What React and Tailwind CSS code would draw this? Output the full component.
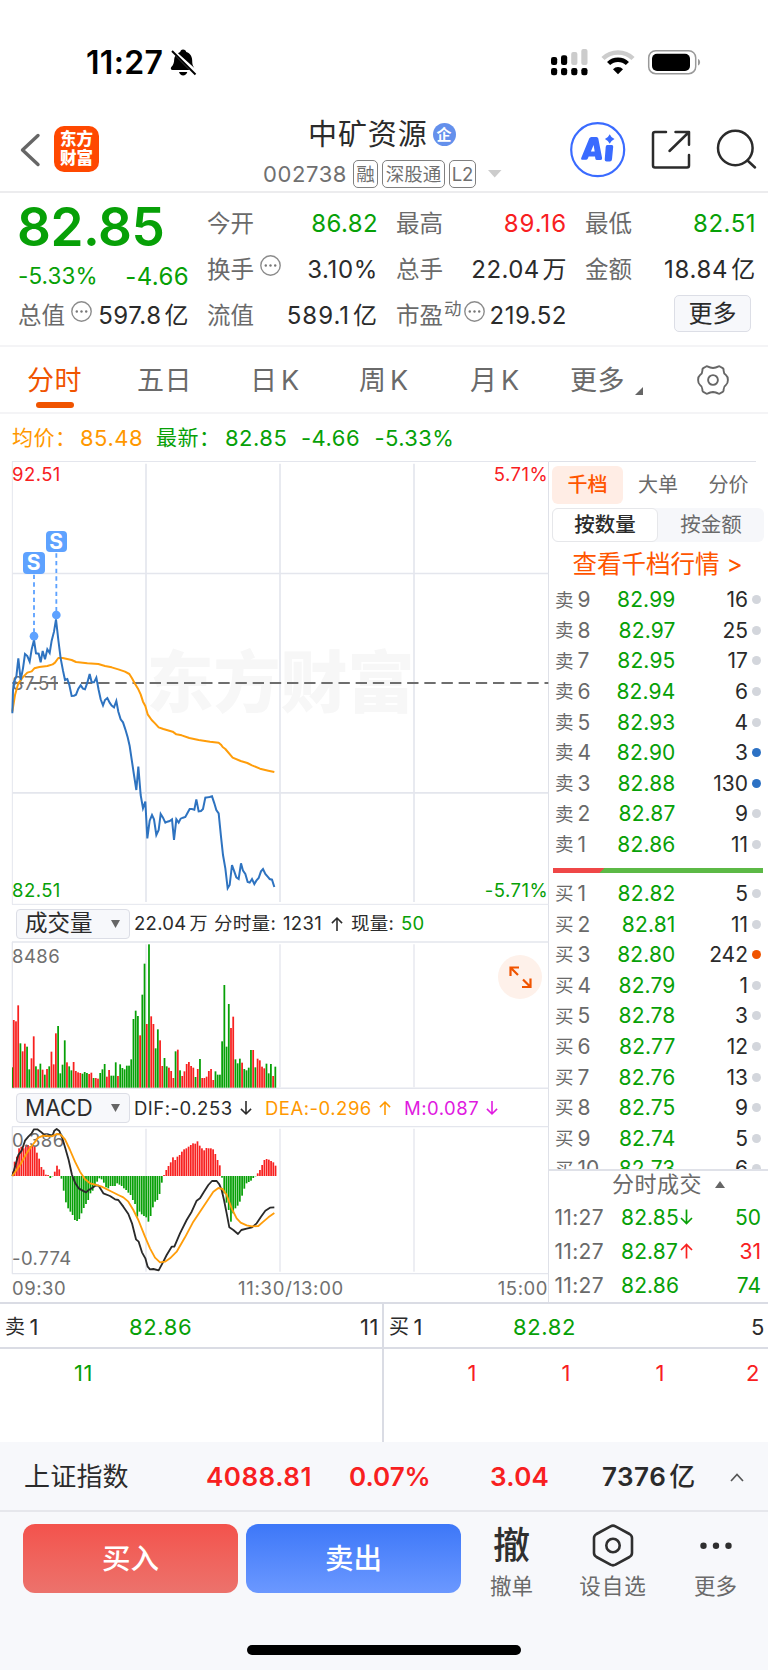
import React from "react";

const GREEN = "#07a007";
const RED = "#f8201f";

const pricePoints =
  "37,790 39,720 42,695 49,680 55,625 62,690 69,655 75,612 82,618 89,635 95,598 102,570 108,610 116,611 122,637 128,603 135,628 142,598 149,609 155,572 162,545 168,508 175,570 182,625 189,662 195,690 202,687 208,705 215,738 222,737 228,734 235,716 242,706 249,716 255,718 262,698 269,672 275,697 282,697 289,683 296,720 302,748 309,766 315,750 322,744 329,758 335,767 342,772 349,753 355,785 362,808 369,817 376,838 383,862 389,888 396,935 402,975 409,1020 415,950 422,1035 429,1075 436,1055 442,1165 449,1112 456,1095 462,1108 469,1155 476,1140 482,1092 489,1103 496,1118 502,1115 509,1113 516,1108 522,1170 529,1108 536,1118 542,1106 549,1103 556,1101 562,1090 569,1077 576,1077 583,1079 589,1048 596,1084 603,1083 609,1077 616,1043 623,1042 629,1041 636,1039 643,1060 649,1080 656,1090 663,1160 669,1215 676,1255 683,1315 689,1305 696,1245 703,1265 709,1282 716,1287 723,1240 729,1262 736,1272 743,1296 749,1298 756,1287 763,1302 769,1292 776,1284 783,1264 789,1257 796,1272 803,1280 809,1287 816,1289 823,1311";
const averagePoints =
  "37,785 45,735 55,700 68,682 82,668 95,664 103,655 118,651 142,648 158,643 165,638 175,624 188,624 215,630 228,636 262,640 295,642 315,648 335,652 355,658 375,665 388,672 396,685 404,700 415,718 422,733 429,755 436,768 443,793 455,810 465,820 476,832 490,837 518,845 529,853 545,856 568,864 596,870 630,875 656,878 663,884 668,891 676,897 698,923 722,933 742,939 756,946 780,956 805,962 823,966";
const difPoints =
  "37,828 45,800 55,765 65,752 75,722 85,710 95,700 102,688 112,688 122,695 130,702 138,708 148,705 158,706 163,692 170,687 178,693 186,712 196,745 206,780 216,825 226,850 236,865 248,872 258,877 266,870 275,865 286,857 296,857 310,880 330,888 345,898 355,900 370,920 385,942 396,970 408,1018 416,1025 426,1057 436,1075 443,1100 450,1108 460,1107 476,1111 490,1085 500,1065 515,1040 523,1040 540,1000 560,960 575,935 590,902 600,895 612,875 625,855 636,843 650,843 658,853 665,870 672,900 680,940 688,982 700,990 714,1002 724,990 740,986 756,982 770,970 783,950 796,932 810,923 823,922";
const deaPoints =
  "37,828 60,795 80,760 95,738 115,713 130,707 155,709 170,702 182,704 195,718 210,750 225,785 240,815 255,838 270,850 290,855 305,860 325,870 355,885 370,892 385,905 400,930 415,960 435,1010 450,1045 465,1073 480,1087 495,1085 510,1075 530,1055 555,1012 580,965 600,935 620,905 640,875 655,864 668,867 680,885 695,925 710,955 722,968 740,976 756,979 775,978 790,965 805,952 823,939";
const volumeBars =
  "G502 R360 R364 R316 G430 R454 R431 G440 G508 R475 R409 G499 R508 G491 R509 G524 R507 G499 R455 R493 R400 G378 G520 G494 G421 R487 G499 G511 R486 R513 R517 R519 G521 G516 G519 R522 R518 G534 R534 R536 G519 G508 G492 R530 R510 G527 G527 G487 R528 G493 G504 G508 G497 G497 G478 G357 G332 G348 R406 G284 G191 R372 G133 R349 R372 G445 G388 R421 R498 G474 G499 R503 R513 R534 G454 R449 G511 R528 R514 R492 R486 R498 R503 G531 R507 G477 R534 R534 R530 R513 R507 R540 G514 G524 G524 G424 G255 G440 G312 R384 R350 G478 G490 G476 R488 G507 G511 G503 G450 R450 G502 R476 R481 R500 R505 G491 G520 G492 R528 G500".split(" ");
const macdBars = [
  815, 785, 770, 745, 740, 745, 735, 735, 738, 735, 740, 758, 776, 801, 809, 824, 825, 834, 829, 815, 797, 808, 836, 872, 907, 925,
  935, 945, 960, 963, 957, 940, 924, 912, 900, 880, 872, 855, 845, 835, 838, 848, 862, 865, 858, 858, 858, 850, 854, 858, 865, 870,
  878, 885, 900, 912, 950, 935, 943, 948, 952, 965, 948, 922, 905, 900, 882, 848, 825, 810, 798, 787, 772, 780, 770, 765, 755, 748,
  745, 740, 735, 730, 731, 724, 737, 745, 751, 744, 745, 745, 748, 762, 780, 796, 833, 880, 908, 930, 965, 940, 925, 917, 905, 887,
  866, 850, 846, 842, 834, 829, 820, 810, 795, 780, 777, 779, 783, 787, 797,
];

const sells = [
  [9, "82.99", 16],
  [8, "82.97", 25],
  [7, "82.95", 17],
  [6, "82.94", 6],
  [5, "82.93", 4],
  [4, "82.90", 3, "bg-[#2c71c4]"],
  [3, "82.88", 130, "bg-[#2c71c4]"],
  [2, "82.87", 9],
  [1, "82.86", 11],
];
const buys = [
  [1, "82.82", 5],
  [2, "82.81", 11],
  [3, "82.80", 242, "bg-[#f05400]"],
  [4, "82.79", 1],
  [5, "82.78", 3],
  [6, "82.77", 12],
  [7, "82.76", 13],
  [8, "82.75", 9],
  [9, "82.74", 5],
  [10, "82.73", 6],
];

function StatusBar() {
  return (
    <div className="flex h-[98px] items-start pt-[46px] pl-[86px]">
      <span className="w-[83px] text-[32px] leading-[34px] font-semibold tracking-[0.300px] text-black">11:27</span>
      <svg width="30" height="32" viewBox="0 0 30 32">
        <path d="M14 3.500c1.800 0 3 1 3.300 2.400 4 1.200 5.900 4.500 5.900 8.600 0 5 1.200 6.500 3.600 8.800L9 7.300c.8-.7 1.500-1.100 2.200-1.400C11.500 4.500 12.300 3.500 14 3.500z" fill="#000" />
        <path d="M6.300 9.700 20.500 24H3.500c-1.600 0-2.200-1.500-1.200-2.900C4.800 18.200 5 16.500 5.200 13.200c0-1.300.5-2.500 1.100-3.500zM10 26h8.300c-.7 2.200-2.200 3.500-4.200 3.500S10.700 28.200 10 26z" fill="#000" />
        <path d="M3 5 26.500 28.500" stroke="#000" strokeWidth="2" />
      </svg>
      <svg className="ml-[350px]" width="160" height="32" viewBox="549 46 160 32">
        {[551, 561, 571.2, 581.3].map((x) => (
          <rect key={x} x={x} y="68" width="6.200" height="7.200" rx="2.200" />
        ))}
        <rect x="551" y="57" width="6.200" height="8" rx="2.200" />
        <rect x="561" y="55.300" width="6.200" height="9.700" rx="2.200" />
        <rect x="571.200" y="52" width="6.200" height="13" rx="2" fill="#ccc" />
        <rect x="581.300" y="49" width="6.200" height="16" rx="2" fill="#ccc" />
        <path d="M603 58.500a21.500 21.500 0 0 1 30 0" stroke="#ccc" strokeWidth="4.500" fill="none" />
        <path d="M608.600 63.500a13.500 13.500 0 0 1 18.800 0" stroke="#000" strokeWidth="4.500" fill="none" />
        <path d="M613 69.200a7 7 0 0 1 10 0l-5 5z" />
        <rect x="648.700" y="50.700" width="47" height="23" rx="7" fill="none" stroke="#999" strokeWidth="1.500" />
        <rect x="652" y="53.700" width="38" height="17.300" rx="5" />
        <path d="M698 59v6.500c2.800-1.200 2.800-5.300 0-6.500z" fill="#999" />
      </svg>
    </div>
  );
}

function Header() {
  const tag = "flex h-[28px] items-center justify-center rounded-[5px] border border-[#808080] text-[18.500px] leading-none text-[#707070]";
  return (
    <div className="flex h-[95px] border-b-2 border-[#ececee]">
      <svg className="mt-[34px] ml-[18px]" width="24" height="36" viewBox="18 132 24 36">
        <path d="M38 135.500 22.500 150 38 164.500" fill="none" stroke="#666" strokeWidth="3.400" strokeLinecap="round" strokeLinejoin="round" />
      </svg>
      <div className="mt-[28px] ml-[12px] flex h-[46px] w-[45px] flex-col items-center justify-center rounded-[10px] bg-[#ff4800] text-[16.500px] leading-[19.500px] font-black text-white">
        <span>东方</span>
        <span>财富</span>
      </div>
      <div className="ml-[164px] flex w-[241px] flex-col">
        <div className="mt-[20px] ml-[45px] flex h-[32px] items-center">
          <span className="text-[29px] leading-none tracking-[0.900px] text-[#2b2b2b]">中矿资源</span>
          <span className="ml-[5px] flex size-[23px] items-center justify-center rounded-full bg-[#6490ec] text-[15px] leading-none font-bold text-white">企</span>
        </div>
        <div className="mt-[10px] flex items-center">
          <span className="w-[90px] text-[22px] leading-none tracking-[0.600px] text-[#707070]">002738</span>
          <span className={tag + " w-[25px]"}>融</span>
          <span className={tag + " ml-[4px] w-[63px]"}>深股通</span>
          <span className={tag + " ml-[4px] w-[27px]"}>L2</span>
          <svg className="ml-[12px]" width="14" height="8">
            <path d="M0 0h13.500L6.700 7.500z" fill="#ccc" />
          </svg>
        </div>
      </div>
      <svg className="mt-[22px] ml-[64px]" width="196" height="60" viewBox="568 120 196 60">
        <circle cx="597.700" cy="149.700" r="26.500" fill="none" stroke="#3a6bff" strokeWidth="2.200" />
        <path
          fillRule="evenodd"
          d="M591.400 137h5q1.600 0 1.900 1.500l3.800 19.500q.3 2-1.600 2h-3.500q-1.500 0-1.700-1.500l-.3-2h-6.300l-1 2.200q-.5 1.100-1.700 1.100h-3.300q-2.200 0-1.400-2l7.900-19.300q.7-1.500 2.200-1.500zM593.600 145l-2.700 6.500h3.800z"
          fill="#3a6bff"
        />
        <path d="M607.300 145h4.400q1.700 0 1.500 1.700l-1.200 12.500q-.2 2.300-2.200 2.300h-3.200q-2 0-1.900-2l1-12.500q.1-2 1.600-2zM609.700 134.200q1.400 3.400 4.800 4.800-3.400 1.400-4.800 4.800-1.400-3.400-4.800-4.800 3.400-1.400 4.800-4.800z" fill="#3a6bff" />
        <g fill="none" stroke="#2b2b2b" strokeWidth="2.500" strokeLinecap="round" strokeLinejoin="round">
          <path d="M666 132h-11q-2 0-2 2v31.500q0 2 2 2h32q2 0 2-2V155M675.500 132H689v12.800M688.500 132.500 669.500 151" />
          <circle cx="735.300" cy="148" r="17.300" />
          <path d="M747.500 160.500 755 167.500" />
        </g>
      </svg>
    </div>
  );
}

function Dots() {
  return (
    <svg width="21" height="21" viewBox="0 0 21 21">
      <circle cx="10.500" cy="10.500" r="9.700" fill="none" stroke="#8c8c8c" strokeWidth="1.400" />
      <g fill="#777">
        <circle cx="5.800" cy="10.500" r="1.200" />
        <circle cx="10.500" cy="10.500" r="1.200" />
        <circle cx="15.200" cy="10.500" r="1.200" />
      </g>
    </svg>
  );
}

function Stat({ label, value, unit, sup, dots, tone = "text-[#2b2b2b]", spacing = "tracking-[0.400px]" }) {
  return (
    <div className="flex h-[46px] items-center justify-between text-[24px] leading-none whitespace-nowrap">
      <div className="flex items-center text-[#6a6a6a]">
        <span className="text-[23.500px]">{label}</span>
        {sup && <span className="mb-[14px] ml-[1px] text-[17.500px]">{sup}</span>}
        {dots && (
          <span className={sup ? "mb-[10px] ml-[2px]" : "mb-[10px] ml-[6px]"}>
            <Dots />
          </span>
        )}
      </div>
      <span className={tone + " -mr-[1px] " + spacing}>
        {value}
        {unit && <span className="ml-[3px]">{unit}</span>}
      </span>
    </div>
  );
}

function Quote() {
  return (
    <div className="grid h-[154px] grid-cols-[170px_170px_170px_170px] gap-x-[19px] border-b-2 border-[#f4f4f6] pt-[8px] pl-[18px]">
      <div className="flex flex-col text-[#07a007]">
        <div className="-ml-[1px] h-[52px] text-[53px] leading-[52px] font-semibold tracking-[-0.500px]">82.85</div>
        <div className="mt-[9px] mb-[2px] flex h-[29px] items-center justify-between leading-none">
          <span className="text-[22.500px] tracking-[0.100px]">-5.33%</span>
          <span className="-mr-[1px] text-[24px] tracking-[0.400px]">-4.66</span>
        </div>
        <Stat label="总值" value="597.8" unit="亿" dots spacing="tracking-[0.500px]" />
      </div>
      <div>
        <Stat label="今开" value="86.82" tone="text-[#07a007]" />
        <Stat label="换手" value="3.10%" dots spacing="tracking-[0.650px]" />
        <Stat label="流值" value="589.1" unit="亿" spacing="tracking-[1px]" />
      </div>
      <div>
        <Stat label="最高" value="89.16" tone="text-[#f8201f]" spacing="tracking-[0.950px]" />
        <Stat label="总手" value="22.04" unit="万" />
        <Stat label="市盈" value="219.52" sup="动" dots spacing="tracking-[0.500px]" />
      </div>
      <div>
        <Stat label="最低" value="82.51" tone="text-[#07a007]" spacing="tracking-[0.500px]" />
        <Stat label="金额" value="18.84" unit="亿" spacing="tracking-[0.700px]" />
        <div className="mt-[2px] mr-[4px] ml-auto flex h-[37px] w-[77px] items-center justify-center rounded-[5px] border border-[#dcdee6] bg-[#f7f8fb] text-[24px] leading-none text-[#2b2b2b]">更多</div>
      </div>
    </div>
  );
}

function KTab({ children, width }) {
  return (
    <span className={"flex gap-[4px] " + width}>
      <span>{children}</span>
      <span>K</span>
    </span>
  );
}

function Tabs() {
  return (
    <div className="flex h-[67px] items-center border-b-2 border-[#f4f4f6] pt-[1px] text-[27px] leading-none whitespace-nowrap text-[#6a6a6a]">
      <div className="ml-[27px] flex w-[110px] flex-col text-[#f05400]">
        <span className="mt-[15px] tracking-[0.500px]">分时</span>
        <span className="mt-[8px] ml-[9px] h-[6px] w-[38px] rounded-full bg-[#f05400]" />
      </div>
      <span className="w-[113px] tracking-[0.500px]">五日</span>
      <KTab width="w-[109px]">日</KTab>
      <KTab width="w-[111px]">周</KTab>
      <KTab width="w-[100px]">月</KTab>
      <span className="w-[65px] tracking-[0.500px]">更多</span>
      <svg width="8" height="8" className="mt-[21px]">
        <path d="M8 0v8H0z" fill="#666" />
      </svg>
      <svg className="ml-[54px]" width="32" height="30" viewBox="-16 -15 32 30">
        <path
          d="M0-12Q3-12.200 5-13.400Q6.200-14 7.300-13.300L9.700-11.900Q10.700-11.200 10.600-10Q10.400-6.600 12.900-5Q14.900-3.500 14.900 0Q14.900 3.500 12.900 5Q10.400 6.600 10.600 10Q10.700 11.200 9.700 11.900L7.300 13.300Q6.200 14 5 13.400Q3 12.200 0 12Q-3 12.200-5 13.400Q-6.200 14-7.300 13.300L-9.700 11.900Q-10.700 11.200-10.600 10Q-10.400 6.600-12.900 5Q-14.900 3.500-14.900 0Q-14.900-3.500-12.900-5Q-10.400-6.600-10.600-10Q-10.700-11.200-9.700-11.900L-7.300-13.300Q-6.200-14-5-13.400Q-3-12.200 0-12z"
          fill="none"
          stroke="#666"
          strokeWidth="1.900"
          strokeLinejoin="round"
        />
        <circle r="4.900" fill="none" stroke="#666" strokeWidth="1.900" />
      </svg>
    </div>
  );
}

function PriceLine() {
  return (
    <div className="flex h-[47px] items-center pl-[12px] text-[22px] leading-none tracking-[0.500px] whitespace-nowrap text-[#07a007]">
      <span className="w-[68px] text-[21px] text-[#ff9800]">均价：</span>
      <span className="w-[76px] text-[#ff9800]">85.48</span>
      <span className="w-[69px] text-[21px]">最新：</span>
      <span className="w-[76px]">82.85</span>
      <span className="w-[73.500px]">-4.66</span>
      <span className="tracking-[0.400px]">-5.33%</span>
    </div>
  );
}

const grid = "#e4e6ed";

function PriceChart() {
  return (
    <div className="relative h-[444px] w-[549px] text-[18.500px] leading-none tracking-[0.450px]">
      <div className="absolute top-[188px] left-[146.500px] text-[67px] font-black tracking-normal whitespace-nowrap text-[#f7f7f7]">东方财富</div>
      <svg className="absolute inset-0" width="549" height="444" viewBox="0 33 1647 1332">
        <g stroke={grid} fill="none">
          <path d="M36 34.500H1647M36 1363H1647M37 34V1363" strokeWidth="3" />
          <path d="M438 41V1356M840 41V1356M1242 41V1356" strokeWidth="5" />
          <path d="M37 370.500H1645M37 1028.500H1645" strokeWidth="5" />
        </g>
        <path d="M37 699H1645" stroke="#6e6e6e" strokeWidth="6" strokeDasharray="34 17.500" />
      </svg>
      <span className="absolute top-[213px] left-[12px] text-[#707070]">87.51</span>
      <svg className="absolute inset-0" width="549" height="444" viewBox="0 33 1647 1332">
        <polyline points={averagePoints} fill="none" stroke="#ff9d0a" strokeWidth="6" strokeLinejoin="round" />
        <polyline points={pricePoints} fill="none" stroke="#2e73c0" strokeWidth="6" />
        <path d="M102 374V550M169 310V488" stroke="#5ea2ff" strokeWidth="5.500" strokeDasharray="13 10" />
        <circle cx="102" cy="558.500" r="13" fill="#5ea2ff" />
        <circle cx="169" cy="495" r="13" fill="#5ea2ff" />
      </svg>
      <span className="absolute top-[91px] left-[23px] flex size-[21.500px] items-center justify-center rounded-[4px] bg-[#5ea2ff] text-[21px] font-bold tracking-normal text-white">S</span>
      <span className="absolute top-[69.500px] left-[45.500px] flex size-[21.500px] items-center justify-center rounded-[4px] bg-[#5ea2ff] text-[21px] font-bold tracking-normal text-white">S</span>
      <span className="absolute top-[3.500px] left-[12px] text-[#f8201f]">92.51</span>
      <span className="absolute top-[3.500px] right-[1px] text-[#f8201f]">5.71%</span>
      <span className="absolute top-[420px] left-[12px] text-[#07a007]">82.51</span>
      <span className="absolute top-[420px] right-[1px] text-[#07a007]">-5.71%</span>
    </div>
  );
}

function Picker({ children }) {
  return (
    <div className="ml-[16px] flex h-[30px] w-[114px] shrink-0 items-center justify-between rounded-[4px] border border-[#dcdee6] bg-[#f7f8fb] pr-[9px] pl-[8px] text-[22.500px] leading-none tracking-normal text-[#2b2b2b]">
      <span>{children}</span>
      <svg width="9" height="8">
        <path d="M0 0h9L4.500 8z" fill="#666" />
      </svg>
    </div>
  );
}

function Arrow({ up, className = "", size = 13 }) {
  return (
    <svg className={className} width={size} height="16" viewBox="0 0 13 16" fill="none" stroke="currentColor" strokeWidth="1.700">
      {up ? <path d="M6.500 15.500V1.500M1 7 6.500 1.500 12 7" /> : <path d="M6.500.500V14.500M1 9 6.500 14.500 12 9" />}
    </svg>
  );
}

function VolumeChart() {
  return (
    <div className="relative h-[148px] text-[18.500px] leading-none tracking-[0.450px] text-[#707070]">
      <svg className="absolute inset-0" width="549" height="148" viewBox="0 123 1647 444">
        <path d="M36 126H1645M36 565H1645" stroke={grid} strokeWidth="5" />
        <path d="M37 126V565M438 133V562M840 133V562M1242 133V562" stroke={grid} strokeWidth="4" />
        {volumeBars.map((bar, i) => (
          <rect key={i} x={Math.max(36, 32 + i * 6.65)} y={Number(bar.slice(1))} width="5.300" height={563 - Number(bar.slice(1))} fill={bar[0] === "G" ? GREEN : RED} />
        ))}
      </svg>
      <span className="absolute top-[6px] left-[12px]">8486</span>
      <svg className="absolute top-[14px] left-[498px]" width="44" height="44" viewBox="0 0 44 44">
        <circle cx="22" cy="22" r="22" fill="#fef1ea" />
        <path d="M21 12.500H12.500V21M12.500 12.500 20 20M32.500 23.500V32H24M32.500 32 25 24.500" fill="none" stroke="#f05400" strokeWidth="2.200" />
      </svg>
    </div>
  );
}

function MacdChart() {
  return (
    <div className="relative h-[149px] text-[18.500px] leading-none tracking-[0.450px] text-[#707070]">
      <svg className="absolute inset-0" width="549" height="149" viewBox="0 678 1647 447">
        <path d="M36 680H1645M36 1121H1645" stroke={grid} strokeWidth="4" />
        <path d="M37 680V1121M438 686V1115M840 686V1115M1242 686V1115" stroke={grid} strokeWidth="4" />
        {macdBars.map((y, i) => (
          <rect key={i} x={Math.max(36, 34.6 + i * 6.69)} y={Math.min(y, 828)} width="5.200" height={Math.abs(828 - y)} fill={y > 828 ? GREEN : RED} />
        ))}
      </svg>
      <span className="absolute top-[5px] left-[12px]">0.386</span>
      <span className="absolute top-[123px] left-[12px]">-0.774</span>
      <svg className="absolute inset-0" width="549" height="149" viewBox="0 678 1647 447">
        <polyline points={difPoints} fill="none" stroke="#2a2a2a" strokeWidth="5.500" strokeLinejoin="round" />
        <polyline points={deaPoints} fill="none" stroke="#ff9d0a" strokeWidth="5.500" strokeLinejoin="round" />
      </svg>
    </div>
  );
}

function ChartColumn() {
  return (
    <div className="w-[549px] shrink-0 border-r border-[#dfe1e8]">
      <PriceChart />
      <div className="flex h-[36px] items-center pt-[1px] text-[18.500px] leading-none tracking-[0.300px] whitespace-nowrap text-[#2b2b2b]">
        <Picker>成交量</Picker>
        <span className="ml-[4px] flex w-[80px] items-center gap-[3px]">
          <span>22.04</span>
          <span className="text-[18px]">万</span>
        </span>
        <span className="w-[69px]">分时量:</span>
        <span className="w-[48px]">1231</span>
        <Arrow up size={12} />
        <span className="ml-[8px] w-[50px]">现量:</span>
        <span className="text-[#07a007]">50</span>
      </div>
      <VolumeChart />
      <div className="flex h-[37px] items-center pt-[1px] text-[18.500px] leading-none tracking-[0.500px] whitespace-nowrap text-[#2b2b2b]">
        <Picker>MACD</Picker>
        <span className="ml-[4px] w-[106px]">DIF:-0.253</span>
        <Arrow size={12} />
        <span className="ml-[13px] w-[114px] text-[#ff9800]">DEA:-0.296</span>
        <Arrow up size={12} className="text-[#ff9800]" />
        <span className="ml-[13px] w-[82px] text-[#e01ae0]">M:0.087</span>
        <Arrow size={12} className="text-[#e01ae0]" />
      </div>
      <MacdChart />
      <div className="flex h-[27px] items-center justify-between pl-[12px] text-[18.500px] leading-none tracking-[0.550px] text-[#707070]">
        <span className="w-[100px]">09:30</span>
        <span className="ml-[22px] tracking-[0.750px]">11:30/13:00</span>
        <span className="w-[100px] text-right">15:00</span>
      </div>
    </div>
  );
}

function Level({ side, row }) {
  const [n, price, qty, dot = "bg-[#d3d6dc]"] = row;
  return (
    <div className="flex h-[30.580px] items-center pl-[6px] text-[21px] leading-none whitespace-nowrap">
      <span className="flex w-[50px] items-center gap-[4px] text-[#6a6a6a]">
        <span className="text-[18.500px]">{side}</span>
        <span>{n}</span>
      </span>
      <span className="w-[70.500px] text-right tracking-[0.150px] text-[#07a007]">{price}</span>
      <span className="w-[72.500px] text-right text-[#2b2b2b]">{qty}</span>
      <span className={"ml-[3.500px] size-[9px] rounded-full " + dot} />
    </div>
  );
}

function OrderBook() {
  return (
    <div className="flex h-[842px] w-[219px] flex-col">
      <div className="mr-[12px] h-px shrink-0 bg-[#dfe1e8]" />
      <div className="mt-[4px] flex h-[38px] shrink-0 items-center pl-[3px] text-[20px] leading-none text-[#6a6a6a]">
        <span className="flex h-full w-[71px] items-center justify-center rounded-[6px] bg-[#ffede5] font-medium text-[#ff5500]">千档</span>
        <span className="w-[70px] text-center">大单</span>
        <span className="w-[71px] text-center">分价</span>
      </div>
      <div className="mt-[4px] ml-[3px] flex h-[34px] w-[212px] shrink-0 items-center rounded-[6px] bg-[#f6f7fa] text-[20.500px] leading-none text-[#6a6a6a]">
        <span className="flex h-full w-[106px] items-center justify-center rounded-[6px] border border-[#e6e7ea] bg-white font-medium text-[#2b2b2b]">按数量</span>
        <span className="w-[106px] text-center">按金额</span>
      </div>
      <div className="flex h-[42.500px] shrink-0 items-center pt-[1px] pl-[23.500px] text-[24.500px] leading-none whitespace-nowrap text-[#ff5500]">
        <span>查看千档行情</span>
        <span className="ml-[7px]">&gt;</span>
      </div>
      <div className="h-[275.300px] shrink-0">
        {sells.map((r) => (
          <Level key={r[0]} side="卖" row={r} />
        ))}
      </div>
      <div className="mt-[8.200px] ml-[4px] flex h-[5px] w-[210px] shrink-0 bg-[linear-gradient(135deg,#ef4747_36px,#5cb946_36.500px)]" />
      <div className="mt-[5.300px] h-[291px] shrink-0 overflow-hidden">
        {buys.map((r) => (
          <Level key={r[0]} side="买" row={r} />
        ))}
      </div>
      <div className="flex h-[31px] shrink-0 items-center justify-center border-t-2 border-[#dfe1e8] pb-[3px] text-[22px] leading-none tracking-[0.500px] text-[#6a6a6a]">
        <span className="ml-[20px]">分时成交</span>
        <svg className="ml-[13px]" width="10" height="7">
          <path d="M0 7h10L5 0z" fill="#666" />
        </svg>
      </div>
      <div>
        <Trade price="82.85" vol="50" arrow={<Arrow size={13} />} tone="text-[#07a007]" />
        <Trade price="82.87" vol="31" arrow={<Arrow up size={13} />} tone="text-[#f8201f]" />
        <Trade price="82.86" vol="74" tone="text-[#07a007]" />
      </div>
    </div>
  );
}

function Trade({ price, vol, arrow, tone }) {
  return (
    <div className="flex h-[34px] shrink-0 items-center pl-[5.500px] text-[21px] leading-none">
      <span className="w-[66.500px] tracking-[0.300px] text-[#6a6a6a]">11:27</span>
      <span className="w-[59px] tracking-[0.150px] text-[#07a007]">{price}</span>
      <span className={"w-[20px] " + tone}>{arrow}</span>
      <span className={"w-[61px] text-right " + tone}>{vol}</span>
    </div>
  );
}

function Queue({ side, price, total, cells, tone, border }) {
  return (
    <div className={"w-[384px] text-[22px] leading-none tracking-[0.600px] " + border}>
      <div className="flex h-[45px] items-center border-b-2 border-[#dadce4] pt-[2px] pr-[3px] pl-[5px] text-[#2b2b2b]">
        <span className="flex w-[124px] items-center gap-[4px]">
          <span className="text-[20px]">{side}</span>1
        </span>
        <span className="flex-1 text-[#07a007]">{price}</span>
        <span>{total}</span>
      </div>
      <div className={"grid h-[50px] grid-cols-[93px_94px_94px_95px] items-center pb-[3px] text-right " + tone}>
        {cells.map((c, i) => (
          <span key={i}>{c}</span>
        ))}
      </div>
    </div>
  );
}

function Footer() {
  return (
    <div className="h-[228px] bg-[#f7f8fb]">
      <div className="flex h-[70px] items-center border-b-2 border-[#e6e7ec] pt-[2px] pl-[24px] text-[26px] leading-none font-semibold tracking-[0.500px] whitespace-nowrap text-[#f8201f]">
        <span className="w-[182px] font-normal tracking-[0.200px] text-[#2b2b2b]">上证指数</span>
        <span className="w-[143px]">4088.81</span>
        <span className="w-[141px] tracking-normal">0.07%</span>
        <span className="w-[112px] tracking-[0.300px]">3.04</span>
        <span className="flex w-[128px] items-center text-[#2b2b2b]">
          7376<span className="ml-[3px] text-[26px] font-medium">亿</span>
        </span>
        <svg width="14" height="9">
          <path d="M1 8 7 1.500 13 8" fill="none" stroke="#555" strokeWidth="1.700" />
        </svg>
      </div>
      <div className="flex pl-[23px]">
        <div className="mt-[12px] flex h-[69px] w-[215px] items-center justify-center rounded-[12px] bg-linear-to-b from-[#f3524c] to-[#ec726c] pt-[1px] text-[28.500px] leading-none font-medium text-white">买入</div>
        <div className="mt-[12px] ml-[8px] flex h-[69px] w-[215px] items-center justify-center rounded-[12px] bg-linear-to-b from-[#3d77f8] to-[#6b98ff] pt-[1px] text-[28.500px] leading-none font-medium text-white">卖出</div>
        <div className="mt-[12px] flex w-[101px] flex-col items-center text-[21.500px] leading-none text-[#6a6a6a]">
          <span className="flex h-[43px] items-center text-[37px] font-medium text-[#2f2f2f]">撤</span>
          <span className="mt-[9px]">撤单</span>
        </div>
        <div className="mt-[12px] flex w-[102px] flex-col items-center text-[21.500px] leading-none text-[#6a6a6a]">
          <svg width="42" height="43" viewBox="0 0 42 43" fill="none" stroke="#2f2f2f" strokeWidth="2.600">
            <path d="M18.500 2.300Q21 1 23.500 2.300L37.500 10Q40 11.500 40 14V29Q40 31.500 37.500 33L23.500 40.700Q21 42 18.500 40.700L4.500 33Q2 31.500 2 29V14Q2 11.500 4.500 10z" />
            <circle cx="21" cy="21.500" r="6.700" />
          </svg>
          <span className="mt-[9px] tracking-[1px]">设自选</span>
        </div>
        <div className="mt-[12px] flex w-[103px] flex-col items-center text-[21.500px] leading-none text-[#6a6a6a]">
          <svg width="34" height="43" fill="#2f2f2f">
            <circle cx="4.500" cy="21.700" r="3.200" />
            <circle cx="17" cy="21.700" r="3.200" />
            <circle cx="29.500" cy="21.700" r="3.200" />
          </svg>
          <span className="mt-[9px]">更多</span>
        </div>
      </div>
      <div className="mt-[47px] ml-[247px] h-[10px] w-[274px] rounded-full bg-black" />
    </div>
  );
}

export default function App() {
  return (
    <div className="flex h-[1670px] w-[768px] flex-col overflow-hidden bg-white font-['Inter','Noto_Sans_CJK_SC',sans-serif]">
      <StatusBar />
      <Header />
      <Quote />
      <Tabs />
      <PriceLine />
      <div className="flex h-[841px]">
        <ChartColumn />
        <OrderBook />
      </div>
      <div className="flex h-[140px] border-t-2 border-[#dadce4]">
        <Queue side="卖" price="82.86" total="11" cells={["11", "", "", ""]} tone="text-[#07a007]" border="border-r-2 border-[#dadce4]" />
        <Queue side="买" price="82.82" total="5" cells={["1", "1", "1", "2"]} tone="text-[#f8201f]" border="" />
      </div>
      <Footer />
    </div>
  );
}
